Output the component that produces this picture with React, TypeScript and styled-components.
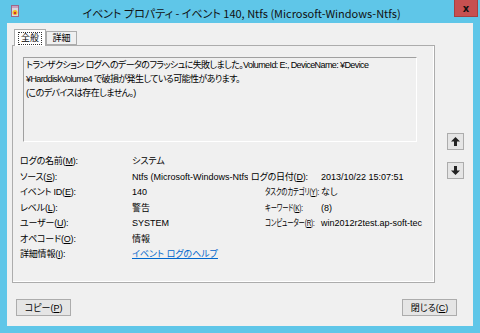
import React from 'react'
import styled, { createGlobalStyle } from 'styled-components'

const GlobalStyle = createGlobalStyle`
  html, body {
    margin: 0;
    padding: 0;
    background: #fff;
  }
  body {
    font-family: "Liberation Sans", "Noto Sans CJK JP", sans-serif;
    font-feature-settings: "palt";
    color: #000;
  }
`

const Frame = styled.div`
  width: 480px;
  height: 333px;
  box-sizing: border-box;
  background: #5fc6e8;
  display: flex;
  flex-direction: column;
  padding: 0 7px 7px 7px;
`

const TitleBar = styled.div`
  height: 23px;
  display: flex;
  align-items: flex-start;
`

const AppIcon = styled.svg`
  margin: 5px 0 0 4px;
  flex: none;
`

const Title = styled.div`
  flex: 1;
  text-align: center;
  font-family: "Noto Sans CJK JP", sans-serif;
  font-size: 11px;
  line-height: 26px;
  white-space: nowrap;
  padding-left: 10px;
  color: #111;
`

const CloseButton = styled.div`
  flex: none;
  width: 24px;
  height: 17px;
  margin-right: -5px;
  background: #c75050;
  border: 1px solid #a64040;
  border-top: none;
  box-sizing: border-box;
  display: flex;
  align-items: center;
  justify-content: center;
  color: #111;
  font-family: "DejaVu Sans", sans-serif;
  font-weight: bold;
  font-size: 10px;
`

const Client = styled.div`
  flex: 1;
  background: #f0f0f0;
  display: flex;
  flex-direction: column;
  padding: 6px 0 0 5px;
  font-size: 9px;
`

const Top = styled.div`
  display: flex;
`

const TabControl = styled.div`
  width: 423px;
  display: flex;
  flex-direction: column;
`

const TabStrip = styled.div`
  height: 16px;
  display: flex;
  align-items: flex-end;
  padding-left: 2px;
`

const Tab = styled.div<{ $active?: boolean }>`
  box-sizing: border-box;
  height: ${(p) => (p.$active ? '17px' : '14px')};
  width: ${(p) => (p.$active ? '32px' : '31px')};
  margin-bottom: ${(p) => (p.$active ? '-1px' : '0')};
  background: ${(p) => (p.$active ? '#ffffff' : '#f0f0f0')};
  border: 1px solid #acacac;
  border-bottom: ${(p) => (p.$active ? 'none' : '1px solid #acacac')};
  display: flex;
  align-items: center;
  justify-content: center;
  position: relative;
  z-index: ${(p) => (p.$active ? 1 : 0)};
  line-height: 11px;
`

const FocusRect = styled.span`
  border: 1px dotted #333;
  padding: 0 2px;
`

const Panel = styled.div`
  height: 238px;
  box-sizing: border-box;
  border: 1px solid #acacac;
  box-shadow: inset -1px -1px 0 #fff;
  background: #f0f0f0;
  padding: 11px 17px 0 10px;
`

const MessageBox = styled.div`
  height: 85px;
  box-sizing: border-box;
  border-top: 1px solid #a0a0a0;
  border-left: 1px solid #a0a0a0;
  border-right: 1px solid #fff;
  border-bottom: 1px solid #fff;
  padding: 0 2px;
  line-height: 14px;
  letter-spacing: -0.6px;
  white-space: nowrap;
  overflow: hidden;
`

const Fields = styled.div`
  display: grid;
  grid-template-columns: 112px 119px 70px 1fr;
  grid-auto-rows: 15.5px;
  margin: 12px -12px 0 -3px;
  line-height: 15px;
  white-space: nowrap;
`

const Label = styled.div<{ $indent?: number }>`
  padding-left: ${(p) => p.$indent ?? 0}px;
  letter-spacing: -0.2px;
`

const Narrow = styled.span`
  display: inline-block;
  transform: scaleX(0.7);
  transform-origin: left center;
`

const Value = styled.div<{ $clip?: boolean }>`
  overflow: ${(p) => (p.$clip ? 'hidden' : 'visible')};
  margin-right: ${(p) => (p.$clip ? '3px' : '0')};
`

const Key = styled.u`
  text-decoration-thickness: 1px;
`

const HelpLink = styled.a`
  color: #0066cc;
  text-decoration: underline;
`

const Side = styled.div`
  margin: 104px 0 0 12px;
  display: flex;
  flex-direction: column;
  gap: 12px;
`

const ArrowButton = styled.div`
  width: 17px;
  height: 17px;
  box-sizing: border-box;
  border: 1px solid #acacac;
  background: #e5e5e5;
  display: flex;
  align-items: center;
  justify-content: center;
`

const Footer = styled.div`
  display: flex;
  justify-content: space-between;
  margin-top: 16px;
  padding: 0 16px 0 4px;
`

const Button = styled.div`
  width: 55px;
  height: 17px;
  box-sizing: border-box;
  border: 1px solid #acacac;
  background: #e5e5e5;
  display: flex;
  align-items: center;
  justify-content: center;
`

const Arrow: React.FC<{ down?: boolean }> = ({ down }) => (
  <svg width="9" height="9" viewBox="0 0 9 9">
    <path
      d="M4.5 0 L9 4.5 L6 4.5 L6 9 L3 9 L3 4.5 L0 4.5 Z"
      fill="#222"
      transform={down ? 'rotate(180 4.5 4.5)' : undefined}
    />
  </svg>
)

const fields: [React.ReactNode, React.ReactNode, React.ReactNode?, React.ReactNode?, number?][] = [
  [<>ログの名前(<Key>M</Key>):</>, 'システム'],
  [<>ソース(<Key>S</Key>):</>, 'Ntfs (Microsoft-Windows-Ntfs)', <>ログの日付(<Key>D</Key>):</>, '2013/10/22 15:07:51', 0],
  [<>イベント ID(<Key>E</Key>):</>, '140', <Narrow>タスクのカテゴリ(<Key>Y</Key>):</Narrow>, 'なし', 14],
  [<>レベル(<Key>L</Key>):</>, '警告', <Narrow>キーワード(<Key>K</Key>):</Narrow>, '(8)', 14],
  [<>ユーザー(<Key>U</Key>):</>, 'SYSTEM', <Narrow>コンピューター(<Key>R</Key>):</Narrow>, 'win2012r2test.ap-soft-tec', 14],
  [<>オペコード(<Key>O</Key>):</>, '情報'],
  [<>詳細情報(<Key>I</Key>):</>, <HelpLink>イベント ログのヘルプ</HelpLink>],
]

export default function App() {
  return (
    <>
      <GlobalStyle />
      <Frame>
        <TitleBar>
          <AppIcon width="8" height="12" viewBox="0 0 8 12">
            <rect x="0.5" y="0.5" width="7" height="11" fill="#d8d8e0" stroke="#9a6a8a" />
            <rect x="1" y="1" width="6" height="2" fill="#c9a0c0" />
            <circle cx="4" cy="7.5" r="2.5" fill="#f0c020" />
            <circle cx="4" cy="8" r="1.2" fill="#d03030" />
          </AppIcon>
          <Title>イベント プロパティ - イベント 140, Ntfs (Microsoft-Windows-Ntfs)</Title>
          <CloseButton>x</CloseButton>
        </TitleBar>
        <Client>
          <Top>
            <TabControl>
              <TabStrip>
                <Tab $active>
                  <FocusRect>全般</FocusRect>
                </Tab>
                <Tab>詳細</Tab>
              </TabStrip>
              <Panel>
                <MessageBox>
                  トランザクション ログへのデータのフラッシュに失敗しました。VolumeId: E:, DeviceName: ¥Device
                  <br />
                  ¥HarddiskVolume4 で破損が発生している可能性があります。
                  <br />
                  (このデバイスは存在しません。)
                </MessageBox>
                <Fields>
                  {fields.map(([l1, v1, l2, v2, indent], i) => (
                    <React.Fragment key={i}>
                      <Label>{l1}</Label>
                      <Value $clip>{v1}</Value>
                      <Label $indent={indent}>{l2}</Label>
                      <Value>{v2}</Value>
                    </React.Fragment>
                  ))}
                </Fields>
              </Panel>
            </TabControl>
            <Side>
              <ArrowButton>
                <Arrow />
              </ArrowButton>
              <ArrowButton>
                <Arrow down />
              </ArrowButton>
            </Side>
          </Top>
          <Footer>
            <Button>コピー(<Key>P</Key>)</Button>
            <Button>閉じる(<Key>C</Key>)</Button>
          </Footer>
        </Client>
      </Frame>
    </>
  )
}
